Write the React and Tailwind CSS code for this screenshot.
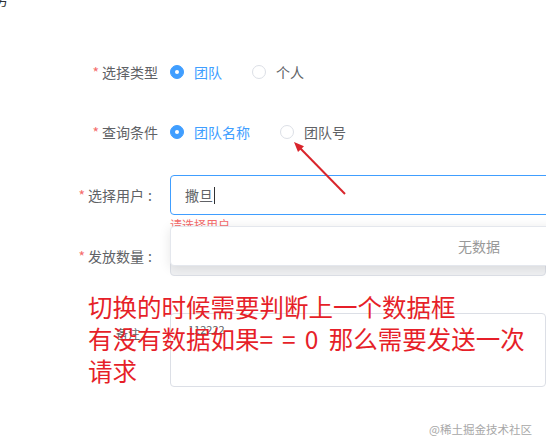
const font = { fontFamily: '"Microsoft YaHei", "Noto Sans CJK SC", "Noto Sans", sans-serif' };

function Radio({ checked, label }) {
  return (
    <label className="flex items-center mr-[30px]">
      {checked ? (
        <span className="w-[14px] h-[14px] rounded-full bg-[#409eff] border border-[#409eff] flex items-center justify-center">
          <span className="w-[4px] h-[4px] rounded-full bg-white" />
        </span>
      ) : (
        <span className="w-[14px] h-[14px] rounded-full bg-white border border-[#dcdfe6]" />
      )}
      <span className={`ml-[10px] text-[14px] leading-[20px] ${checked ? 'text-[#409eff]' : 'text-[#606266]'}`}>
        {label}
      </span>
    </label>
  );
}

function Label({ text, colon }) {
  return (
    <div className="w-[158px] shrink-0 text-right text-[14px] leading-[20px] text-[#606266]">
      <span className="text-[#f56c6c] mr-[3px]">*</span>
      {text}
      {colon && <span className="inline-block w-[14px] text-left pl-[4px]">:</span>}
    </div>
  );
}

export default function App() {
  return (
    <div className="relative w-[546px] h-[448px] overflow-hidden bg-white" style={font}>
      {/* cut off title at the top */}
      <div className="h-[9px] overflow-hidden">
        <div className="mt-[-11px] text-[14px] leading-[20px] text-[#303133] -ml-[6px]">务</div>
      </div>

      {/* 选择类型 */}
      <div className="mt-[43px] h-10 flex items-center">
        <Label text="选择类型" />
        <div className="ml-3 flex items-center">
          <Radio checked label="团队" />
          <Radio label="个人" />
        </div>
      </div>

      {/* 查询条件 */}
      <div className="mt-5 h-10 flex items-center">
        <Label text="查询条件" />
        <div className="ml-3 flex items-center">
          <Radio checked label="团队名称" />
          <Radio label="团队号" />
        </div>
      </div>

      {/* 选择用户 */}
      <div className="mt-[23px] h-10 flex items-center">
        <Label text="选择用户" colon />
        <div className="relative ml-3 h-10">
          <div className="w-[618px] h-10 border border-[#409eff] rounded bg-white flex items-center pl-[14px] text-[14px] text-[#606266]">
            撒旦<span className="ml-[1px] w-px h-[17px] bg-[#303133]" />
          </div>
          <div className="absolute left-0 top-full pt-[3px] text-[12px] leading-[14px] text-[#f56c6c]">请选择用户</div>
          <div className="absolute left-0 top-[51px] z-10 w-[618px] h-10 bg-white rounded border border-[#e4e7ed] shadow-[0_2px_12px_rgba(0,0,0,0.1)] flex items-center justify-center text-[14px] text-[#999]">
            无数据
          </div>
        </div>
      </div>

      {/* 发放数量 */}
      <div className="mt-[21px] h-10 flex items-center">
        <Label text="发放数量" colon />
        <div className="ml-3 w-[618px] h-10 border border-[#dcdfe6] rounded bg-[#eff0f2]" />
      </div>

      {/* 备注 */}
      <div className="mt-[37px] h-[74px] flex items-start">
        <div className="w-[158px] shrink-0 pl-[116px] pt-[14px] text-[12px] leading-[14px] text-[#606266]">备注</div>
        <div className="ml-3 w-[618px] h-[74px] border border-[#dcdfe6] rounded bg-white pl-[17px] pt-[9px] text-[11px] leading-[12px] text-[#606266]">
          112222
        </div>
      </div>

      {/* red annotation */}
      <div className="absolute left-[88px] top-[291px] text-[24.5px] leading-[32px] text-[#e61f29]">
        <div>切换的时候需要判断上一个数据框</div>
        <div>
          有没有数据如果<span className="tracking-[9px]">==</span><span className="mr-[5px]">0</span> 那么需要发送一次
        </div>
        <div>请求</div>
      </div>

      {/* arrow */}
      <svg className="absolute left-0 top-0" width="546" height="448" viewBox="0 0 546 448">
        <line x1="345" y1="194" x2="300" y2="148" stroke="#d9252c" strokeWidth="2" />
        <polygon points="294,142 304,146.3 298,152" fill="#d9252c" />
      </svg>

      <div className="absolute right-[14px] bottom-[12px] text-[11.5px] leading-[14px] text-[#a8a8a8]">@稀土掘金技术社区</div>
    </div>
  );
}
